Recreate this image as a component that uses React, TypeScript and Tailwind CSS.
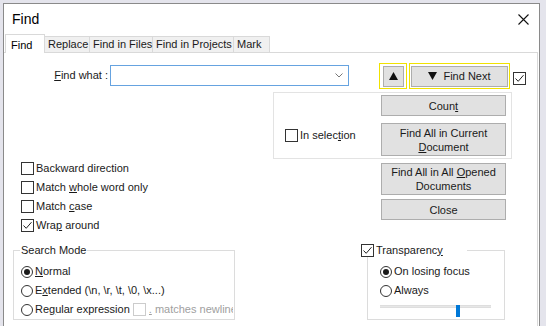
import React from 'react';

const font = "font-['Liberation_Sans',Arial,sans-serif]";

function Check({ checked = false, disabled = false }: { checked?: boolean; disabled?: boolean }) {
  return (
    <div
      className={`w-[13px] h-[13px] shrink-0 border bg-white flex items-center justify-center ${
        disabled ? 'border-[#cccccc]' : 'border-[#333333]'
      }`}
    >
      {checked && (
        <svg width="11" height="11" viewBox="0 0 11 11">
          <path d="M1.5 5.5 L4.2 8.3 L9.5 2.2" fill="none" stroke="#222" strokeWidth="1" />
        </svg>
      )}
    </div>
  );
}

function Radio({ checked = false }: { checked?: boolean }) {
  return (
    <div className="w-[12px] h-[12px] shrink-0 rounded-full border border-[#333333] bg-white flex items-center justify-center">
      {checked && <div className="w-[6px] h-[6px] rounded-full bg-[#1a1a1a]" />}
    </div>
  );
}

function Btn({ children, className = '' }: { children: React.ReactNode; className?: string }) {
  return (
    <div
      className={`w-[125px] bg-[#e1e1e1] border border-[#adadad] flex items-center justify-center text-center leading-[14px] ${className}`}
    >
      {children}
    </div>
  );
}

function CheckRow({ label, checked }: { label: React.ReactNode; checked?: boolean }) {
  return (
    <div className="h-[19px] flex items-center gap-[2px]">
      <Check checked={checked} />
      <span>{label}</span>
    </div>
  );
}

function RadioRow({ label, checked, children }: { label: React.ReactNode; checked?: boolean; children?: React.ReactNode }) {
  return (
    <div className="h-[19px] flex items-center gap-[2px] whitespace-nowrap overflow-hidden">
      <Radio checked={checked} />
      <span className="shrink-0">{label}</span>
      {children}
    </div>
  );
}

export default function App() {
  return (
    <div className={`w-[546px] h-[326px] overflow-hidden bg-[#e4e4ec] pt-[3px] pl-[3px] text-[11px] text-[#1a1a1a] ${font}`}>
      <div className="w-[537px] h-[340px] border border-[#8a8a8a] bg-white">
        {/* Title bar */}
        <div className="h-[30px] flex items-center justify-between pl-[8px] pr-[10px]">
          <span className="text-[14px] text-black">Find</span>
          <svg width="11" height="11" viewBox="0 0 11 11">
            <path d="M0.5 0.5 L10.5 10.5 M10.5 0.5 L0.5 10.5" stroke="#111" strokeWidth="1.1" />
          </svg>
        </div>

        {/* Tabs */}
        <div className="h-[18px] flex items-end pl-[1px] whitespace-nowrap">
          <div className="relative z-10 -mb-px w-[40px] h-[19px] bg-white border border-b-0 border-[#d9d9d9] pl-[5px] pt-[2px] text-black">
            Find
          </div>
          <div className="w-[45px] h-[16px] bg-[#f0f0f0] border-t border-r border-[#d9d9d9] pl-[3px] leading-[15px]">Replace</div>
          <div className="w-[63px] h-[16px] bg-[#f0f0f0] border-t border-r border-[#d9d9d9] pl-[3px] leading-[15px]">Find in Files</div>
          <div className="w-[81px] h-[16px] bg-[#f0f0f0] border-t border-r border-[#d9d9d9] pl-[3px] leading-[15px]">Find in Projects</div>
          <div className="w-[36px] h-[16px] bg-[#f0f0f0] border-t border-r border-[#d9d9d9] pl-[3px] leading-[15px]">Mark</div>
        </div>

        {/* Panel */}
        <div className="w-[534px] h-[300px] border-t border-r border-[#d9d9d9]">
          {/* Find what row */}
          <div className="mt-[10px] h-[26px] flex items-start">
            <div className="w-[104px] h-[21px] mt-[2px] flex items-center justify-end">
              <span>
                <u>F</u>ind what :
              </span>
            </div>
            <div className="ml-[2px] mt-[2px] w-[239px] h-[21px] border border-[#66a3e0] bg-white flex items-center justify-end pr-[5px]">
              <svg width="8" height="5" viewBox="0 0 8 5">
                <path d="M0.5 0.5 L4 4 L7.5 0.5" fill="none" stroke="#777" strokeWidth="1" />
              </svg>
            </div>
            <div className="ml-[30px] w-[28px] h-[26px] border border-[#f0e200] flex items-center justify-center">
              <div className="w-[21px] h-[21px] bg-[#e1e1e1] border border-[#adadad] flex items-center justify-center">
                <svg width="9" height="8" viewBox="0 0 9 8">
                  <path d="M4.5 0 L9 8 L0 8 Z" fill="#111" />
                </svg>
              </div>
            </div>
            <div className="ml-[2px] w-[101px] h-[26px] border border-[#f0e200] flex items-center justify-center">
              <div className="w-[97px] h-[21px] bg-[#e1e1e1] border border-[#adadad] flex items-center justify-center gap-[6px]">
                <svg width="9" height="8" viewBox="0 0 9 8">
                  <path d="M0 0 L9 0 L4.5 8 Z" fill="#111" />
                </svg>
                <span>Find Next</span>
              </div>
            </div>
            <div className="ml-[3px] mt-[9px]">
              <Check checked />
            </div>
          </div>

          {/* In selection group */}
          <div className="mt-[3px] ml-[269px] w-[239px] h-[67px] border border-[#e3e3e3] flex">
            <div className="w-[107px] pl-[11px] pt-[34px]">
              <div className="flex items-center gap-[2px]">
                <Check />
                <span>
                  In selec<u>t</u>ion
                </span>
              </div>
            </div>
            <div className="pt-[2px] flex flex-col gap-[7px]">
              <Btn className="h-[21px]">
                <span>
                  Coun<u>t</u>
                </span>
              </Btn>
              <Btn className="h-[33px]">
                <span>
                  Find All in Current
                  <br />
                  <u>D</u>ocument
                </span>
              </Btn>
            </div>
          </div>

          {/* Options + more buttons */}
          <div className="flex">
            <div className="w-[377px] pl-[17px]">
              <CheckRow label="Backward direction" />
              <CheckRow
                label={
                  <>
                    Match <u>w</u>hole word only
                  </>
                }
              />
              <CheckRow
                label={
                  <>
                    Match <u>c</u>ase
                  </>
                }
              />
              <CheckRow
                checked
                label={
                  <>
                    Wra<u>p</u> around
                  </>
                }
              />
            </div>
            <div className="pt-[4px] flex flex-col gap-[4px]">
              <Btn className="h-[32px]">
                <span>
                  Find All in All <u>O</u>pened
                  <br />
                  Documents
                </span>
              </Btn>
              <Btn className="h-[21px]">Close</Btn>
            </div>
          </div>

          {/* Bottom groups */}
          <div className="mt-[8px] flex items-start">
            <fieldset className="ml-[9px] w-[222px] h-[77px] border border-[#dcdcdc] p-0 m-0 min-w-0">
              <legend className="ml-[6px] px-[1px] leading-[14px]">Search Mode</legend>
              <div className="pt-[5px] pl-[7px] pr-[1px]">
                <RadioRow
                  checked
                  label={
                    <>
                      <u>N</u>ormal
                    </>
                  }
                />
                <RadioRow
                  label={
                    <>
                      E<u>x</u>tended (\n, \r, \t, \0, \x...)
                    </>
                  }
                />
                <RadioRow
                  label={
                    <>
                      Re<u>g</u>ular expression
                    </>
                  }
                >
                  <div className="-ml-[2px] pl-[3px] flex items-center gap-[3px] text-[#a0a0a0] min-w-0">
                    <Check disabled />
                    <span className="overflow-hidden">
                      <u>.</u> matches newline
                    </span>
                  </div>
                </RadioRow>
              </div>
            </fieldset>

            <div className="ml-[132px] mt-[7px] w-[138px] h-[70px] border border-[#dcdcdc] relative">
              <div className="absolute -top-[8px] -left-[7px] w-[106px] h-[14px] bg-white flex items-center gap-[2px]">
                <Check checked />
                <span>
                  Transparenc<u>y</u>
                </span>
              </div>
              <div className="pt-[11px] pl-[12px]">
                <RadioRow checked label="On losing focus" />
                <RadioRow label="Always" />
                <div className="relative w-[111px] h-[14px]">
                  <div className="mt-[5px] h-[3px] bg-[#e7e7e7] border-y border-[#dedede]" />
                  <div className="absolute left-[76px] top-0 w-[4px] h-[12px] bg-[#0078d7]" />
                </div>
              </div>
            </div>
          </div>
        </div>
      </div>
    </div>
  );
}
